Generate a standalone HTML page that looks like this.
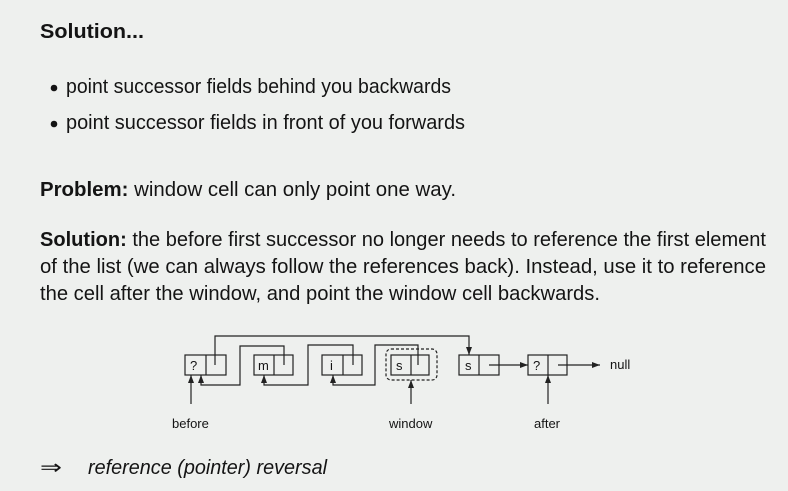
<!DOCTYPE html>
<html><head><style>
html,body{margin:0;padding:0;background:#eef0ee;}
svg{display:block;}
text{font-family:"Liberation Sans",sans-serif;fill:#141414;}
</style></head><body>
<svg width="788" height="491" viewBox="0 0 788 491" xmlns="http://www.w3.org/2000/svg">
<rect width="788" height="491" fill="#eef0ee"/>
<g font-size="20">
<text x="40" y="38" font-weight="bold" textLength="104" lengthAdjust="spacingAndGlyphs">Solution...</text>
<circle cx="54" cy="88" r="3.3" fill="#141414"/>
<text x="66" y="93" textLength="385" lengthAdjust="spacingAndGlyphs">point successor fields behind you backwards</text>
<circle cx="54" cy="124" r="3.3" fill="#141414"/>
<text x="66" y="129" textLength="399" lengthAdjust="spacingAndGlyphs">point successor fields in front of you forwards</text>
<text x="40" y="196" textLength="416" lengthAdjust="spacingAndGlyphs"><tspan font-weight="bold">Problem:</tspan> window cell can only point one way.</text>
<text x="40" y="246" textLength="726" lengthAdjust="spacingAndGlyphs"><tspan font-weight="bold">Solution:</tspan> the before first successor no longer needs to reference the first element</text>
<text x="40" y="273" textLength="726" lengthAdjust="spacingAndGlyphs">of the list (we can always follow the references back). Instead, use it to reference</text>
<text x="40" y="300" textLength="560" lengthAdjust="spacingAndGlyphs">the cell after the window, and point the window cell backwards.</text>
<text x="40" y="474" textLength="22" lengthAdjust="spacingAndGlyphs">⇒</text>
<text x="88" y="474" font-style="italic" textLength="239" lengthAdjust="spacingAndGlyphs">reference (pointer) reversal</text>
</g>
<defs><marker id="a" markerWidth="8" markerHeight="6" refX="8" refY="3" orient="auto" markerUnits="userSpaceOnUse"><path d="M0,0L8,3L0,6z" fill="#222"/></marker></defs>
<g stroke="#222" stroke-width="1.2" fill="none">
<rect x="185" y="355" width="41" height="20"/><line x1="206" y1="355" x2="206" y2="375"/>
<rect x="254" y="355" width="39" height="20"/><line x1="274" y1="355" x2="274" y2="375"/>
<rect x="322" y="355" width="40" height="20"/><line x1="343" y1="355" x2="343" y2="375"/>
<rect x="391" y="355" width="38" height="20"/><line x1="411" y1="355" x2="411" y2="375"/>
<rect x="386" y="349" width="51" height="31" rx="5" stroke-dasharray="3,2"/>
<rect x="459" y="355" width="40" height="20"/><line x1="479" y1="355" x2="479" y2="375"/>
<rect x="528" y="355" width="39" height="20"/><line x1="548" y1="355" x2="548" y2="375"/>
<path d="M215,365V336H469V355" marker-end="url(#a)"/>
<path d="M284,365V346H240V385H201V375" marker-end="url(#a)"/>
<path d="M353,365V345H308V385H264V375" marker-end="url(#a)"/>
<path d="M418,365V345H375V385H333V375" marker-end="url(#a)"/>
<path d="M489,365H528" marker-end="url(#a)"/>
<path d="M558,365H600" marker-end="url(#a)"/>
<path d="M191,404V375" marker-end="url(#a)"/>
<path d="M411,404V380" marker-end="url(#a)"/>
<path d="M548,404V375" marker-end="url(#a)"/>
</g>
<g font-size="13">
<text x="190" y="370">?</text>
<text x="258" y="370">m</text>
<text x="330" y="370">i</text>
<text x="396" y="370">s</text>
<text x="465" y="370">s</text>
<text x="533" y="370">?</text>
<text x="610" y="369">null</text>
<text x="172" y="428">before</text>
<text x="389" y="428">window</text>
<text x="534" y="428">after</text>
</g>
</svg>
</body></html>
